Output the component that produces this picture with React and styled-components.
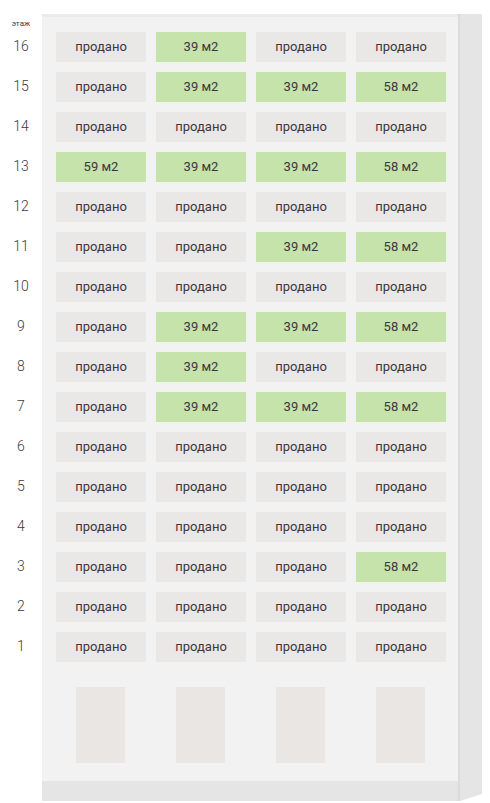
import React from "react";
import styled, { createGlobalStyle } from "styled-components";

const Global = createGlobalStyle`
  html, body { margin: 0; padding: 0; background: #fff; }
  body { font-family: Roboto, "Noto Sans", sans-serif; }
`;

const Page = styled.div`
  display: flex;
  align-items: flex-start;
  width: 490px;
  height: 803px;
`;

const Floors = styled.div`
  width: 42px;
  display: flex;
  flex-direction: column;
  align-items: center;
`;

const FloorHead = styled.div`
  height: 32px;
  box-sizing: border-box;
  padding-top: 19px;
  font-size: 8px;
  line-height: 10px;
  color: #3c3a40;
`;

const FloorList = styled.div`
  display: flex;
  flex-direction: column;
  gap: 10px;
`;

const FloorNum = styled.div`
  height: 30px;
  box-sizing: border-box;
  padding-bottom: 2px;
  display: flex;
  align-items: center;
  justify-content: center;
  font-size: 14px;
  font-weight: 300;
  color: #3c3a40;
`;

const Building = styled.div`
  margin-top: 14px;
  display: flex;
`;

const Face = styled.div`
  width: 416px;
  height: 787px;
  background: #f2f2f2;
  border-top: 3px solid #ebebeb;
  box-sizing: border-box;
  display: flex;
  flex-direction: column;
`;

const Grid = styled.div`
  padding: 15px 12px 0 14px;
  display: grid;
  grid-template-columns: repeat(4, 90px);
  grid-auto-rows: 30px;
  gap: 10px;
`;

const Cell = styled.div`
  background: ${(p) => (p.$free ? "#c5e3aa" : "#e9e8e7")};
  box-sizing: border-box;
  padding-bottom: 2px;
  display: flex;
  align-items: center;
  justify-content: center;
  font-size: 13px;
  color: #3d3540;
`;

const Doors = styled.div`
  margin-top: 25px;
  padding: 0 12px 0 14px;
  display: grid;
  grid-template-columns: repeat(4, 90px);
  gap: 10px;
`;

const Door = styled.div`
  margin-left: 20px;
  width: 49px;
  height: 76px;
  background: #eae6e3;
`;

const Ground = styled.div`
  margin-top: auto;
  height: 20px;
  background: #e6e5e5;
`;

const Edge = styled.div`
  width: 2px;
  height: 787px;
  background: #dcdbdb;
`;

const Side = styled.div`
  width: 22px;
  height: 787px;
  background: #e6e5e5;
  clip-path: polygon(0 0, 100% 0, 100% 780px, 0 100%);
`;

const data = [
  [16, ["s", 39, "s", "s"]],
  [15, ["s", 39, 39, 58]],
  [14, ["s", "s", "s", "s"]],
  [13, [59, 39, 39, 58]],
  [12, ["s", "s", "s", "s"]],
  [11, ["s", "s", 39, 58]],
  [10, ["s", "s", "s", "s"]],
  [9, ["s", 39, 39, 58]],
  [8, ["s", 39, "s", "s"]],
  [7, ["s", 39, 39, 58]],
  [6, ["s", "s", "s", "s"]],
  [5, ["s", "s", "s", "s"]],
  [4, ["s", "s", "s", "s"]],
  [3, ["s", "s", "s", 58]],
  [2, ["s", "s", "s", "s"]],
  [1, ["s", "s", "s", "s"]],
];

export default function App() {
  return (
    <>
      <Global />
      <Page>
        <Floors>
          <FloorHead>этаж</FloorHead>
          <FloorList>
            {data.map(([n]) => (
              <FloorNum key={n}>{n}</FloorNum>
            ))}
          </FloorList>
        </Floors>
        <Building>
          <Face>
            <Grid>
              {data.map(([n, cells]) =>
                cells.map((c, i) =>
                  c === "s" ? (
                    <Cell key={`${n}-${i}`}>продано</Cell>
                  ) : (
                    <Cell key={`${n}-${i}`} $free>
                      {c} м2
                    </Cell>
                  )
                )
              )}
            </Grid>
            <Doors>
              <Door />
              <Door />
              <Door />
              <Door />
            </Doors>
            <Ground />
          </Face>
          <Edge />
          <Side />
        </Building>
      </Page>
    </>
  );
}
